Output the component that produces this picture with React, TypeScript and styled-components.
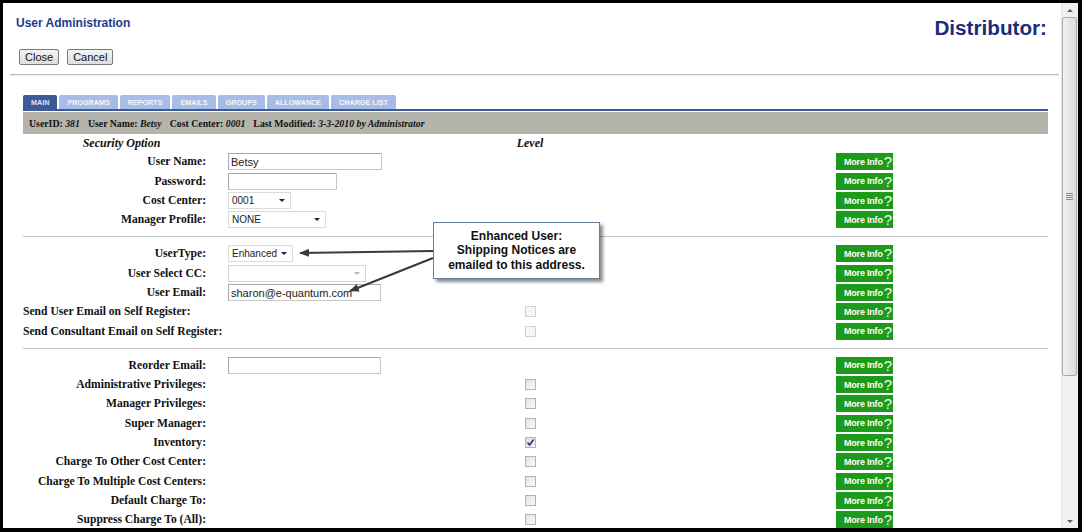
import * as React from 'react';
import styled, { createGlobalStyle } from 'styled-components';

const GlobalStyle = createGlobalStyle`
	html,
	body {
		margin: 0;
		padding: 0;
		overflow: hidden;
		background: #000;
	}
	* {
		box-sizing: border-box;
	}
`;

const Frame = styled.div`
	width: 1082px;
	height: 532px;
	background: #000;
	padding: 3px 4px 4px 3px;
`;

const Window = styled.div`
	display: flex;
	height: 100%;
	background: #fff;
	font-family: Arial, 'Liberation Sans', sans-serif;
`;

const Main = styled.div`
	position: relative;
	flex: 1;
	overflow: hidden;
`;

const Header = styled.div`
	display: flex;
	justify-content: space-between;
	align-items: flex-start;
	padding: 13px 14px 0 13px;
`;

const Title = styled.h1`
	margin: 0;
	font-size: 12px;
	line-height: 14px;
	font-weight: bold;
	color: #1f3c88;
`;

const Brand = styled.div`
	font-size: 20.7px;
	line-height: 24px;
	font-weight: bold;
	color: #1b2d7a;
`;

const ButtonBar = styled.div`
	display: flex;
	gap: 8px;
	margin: 9px 0 0 16px;
`;

const Button = styled.button`
	height: 16px;
	padding: 0 5px;
	font-family: Arial, 'Liberation Sans', sans-serif;
	font-size: 11px;
	line-height: 14px;
	color: #111;
	background: linear-gradient(#f4f4f4, #dedede);
	border: 1px solid #7a7a7a;
	border-radius: 2px;
`;

const Rule = styled.div`
	height: 2px;
	margin: 9px 2px 0 7px;
	border-top: 1px solid #bcbcbc;
	border-bottom: 1px solid #ececec;
`;

const Content = styled.div`
	margin: 19px 13px 0 20px;
`;

const TabStrip = styled.div`
	display: flex;
	gap: 2px;
	border-bottom: 2px solid #3d5a98;
`;

const Tab = styled.div<{ $active?: boolean }>`
	height: 14px;
	padding: 0 8px;
	font-size: 7.2px;
	line-height: 15px;
	font-weight: bold;
	text-transform: uppercase;
	border-radius: 2px 2px 0 0;
	background: ${p => (p.$active ? '#3d5a98' : '#a7bde7')};
	color: ${p => (p.$active ? '#dfe4f0' : '#f3f6fd')};
`;

const InfoBar = styled.div`
	display: flex;
	gap: 8px;
	height: 22px;
	align-items: center;
	padding: 0 6px;
	margin-top: 1px;
	background: #b4b4ac;
	font-family: 'Liberation Serif', 'Times New Roman', serif;
	font-size: 9.8px;
	font-weight: bold;
	color: #111;

	em {
		font-style: italic;
	}
`;

const Row = styled.div<{ $h?: number }>`
	display: grid;
	grid-template-columns: 187px 270px 100px 256px 57px;
	align-items: center;
	height: ${p => p.$h ?? 19.33}px;
	font-family: 'Liberation Serif', 'Times New Roman', serif;
	font-size: 11.6px;
	font-weight: bold;
	color: #111;
`;

const ColumnHead = styled.div<{ $shift?: number }>`
	font-style: italic;
	font-size: 12px;
	text-align: center;
	padding-left: ${p => p.$shift ?? 0}px;
`;

const Label = styled.div<{ $wide?: boolean }>`
	white-space: nowrap;
	text-align: ${p => (p.$wide ? 'left' : 'right')};
	padding-right: ${p => (p.$wide ? 0 : 4)}px;
	grid-column: ${p => (p.$wide ? '1 / 3' : 'auto')};
`;

const Field = styled.div`
	display: flex;
	align-items: center;
	padding-left: 18px;
`;

const TextBox = styled.input<{ $w: number }>`
	width: ${p => p.$w}px;
	height: 17px;
	padding: 0 2px;
	font-family: Arial, 'Liberation Sans', sans-serif;
	font-size: 11px;
	color: #222;
	border: 1px solid #c6c6c6;
	border-top-color: #a9a9a9;
	border-left-color: #a9a9a9;
	outline: none;
`;

const SelectBox = styled.div<{ $w: number; $disabled?: boolean }>`
	display: flex;
	align-items: center;
	width: ${p => p.$w}px;
	height: 17px;
	padding: 0 5px 0 3px;
	font-family: Arial, 'Liberation Sans', sans-serif;
	font-size: 10px;
	font-weight: normal;
	color: #222;
	border: 1px solid ${p => (p.$disabled ? '#d4d4d4' : '#dcdcdc')};
	background: #fff;
`;

const Caret = styled.span<{ $disabled?: boolean }>`
	margin-left: auto;
	width: 0;
	height: 0;
	border-left: 3px solid transparent;
	border-right: 3px solid transparent;
	border-top: 3px solid ${p => (p.$disabled ? '#b9b9b9' : '#222')};
`;

const Level = styled.div`
	display: flex;
	justify-content: center;
`;

const Check = styled.span<{ $disabled?: boolean; $checked?: boolean }>`
	display: flex;
	align-items: center;
	justify-content: center;
	width: 11px;
	height: 11px;
	border: 1px solid ${p => (p.$disabled ? '#d0d0d0' : '#b3b3b3')};
	background: ${p =>
		p.$disabled
			? '#f6f6f6'
			: p.$checked
			? 'linear-gradient(135deg, #d6dcee, #f4f6fb)'
			: 'linear-gradient(135deg, #e2e2e2, #fbfbfb)'};
`;

const MoreInfo = styled.div`
	display: flex;
	align-items: center;
	gap: 1px;
	height: 17px;
	padding-left: 8px;
	background: #1c9a1c;
	color: #fff;
	font-family: Arial, 'Liberation Sans', sans-serif;
	font-size: 9px;
	font-weight: bold;
	letter-spacing: -0.2px;

	span {
		font-size: 15px;
		font-weight: normal;
		line-height: 17px;
		color: #eefbe9;
	}
`;

const Divider = styled.div`
	height: 14.67px;
	display: flex;
	align-items: center;

	&::before {
		content: '';
		flex: 1;
		border-top: 1px solid #c2c2c2;
	}
`;

const Arrows = styled.svg`
	position: absolute;
	left: 0;
	top: 0;
	pointer-events: none;
`;

const Callout = styled.div`
	position: absolute;
	left: 430px;
	top: 219px;
	width: 167px;
	height: 57px;
	display: flex;
	align-items: center;
	justify-content: center;
	text-align: center;
	background: #fff;
	border: 1px solid #667c97;
	box-shadow: 3px 3px 3px rgba(0, 0, 0, 0.45);
	font-size: 12px;
	line-height: 14.5px;
	font-weight: bold;
	color: #111;
`;

const Scrollbar = styled.div`
	display: flex;
	flex-direction: column;
	width: 17px;
	background: #f0f0f0;
	border-left: 1px solid #e6e6e6;
`;

const ScrollArrow = styled.div<{ $down?: boolean }>`
	display: flex;
	align-items: center;
	justify-content: center;
	height: 14px;

	&::before {
		content: '';
		border-left: 3px solid transparent;
		border-right: 3px solid transparent;
		${p => (p.$down ? 'border-top' : 'border-bottom')}: 3px solid #5a5a5a;
	}
`;

const Thumb = styled.div`
	display: flex;
	align-items: center;
	justify-content: center;
	height: 359px;
	margin: 0 1px 0 0;
	border: 1px solid #a9a9a9;
	border-radius: 2px;
	background: linear-gradient(90deg, #f2f2f2, #dcdcdc);
`;

const Grip = styled.div`
	width: 7px;
	height: 7px;
	background: repeating-linear-gradient(#8a8a8a 0 1px, transparent 1px 2px);
`;

const Track = styled.div`
	flex: 1;
`;

const tabs = ['Main', 'Programs', 'Reports', 'Emails', 'Groups', 'Allowance', 'Charge List'];

type Item =
	| { kind: 'text'; label: string; w: number; value?: string }
	| { kind: 'select'; label: string; w: number; value: string; disabled?: boolean }
	| { kind: 'check'; label: string; checked?: boolean; disabled?: boolean; wide?: boolean };

const groups: Item[][] = [
	[
		{ kind: 'text', label: 'User Name:', w: 154, value: 'Betsy' },
		{ kind: 'text', label: 'Password:', w: 109 },
		{ kind: 'select', label: 'Cost Center:', w: 63, value: '0001' },
		{ kind: 'select', label: 'Manager Profile:', w: 98, value: 'NONE' },
	],
	[
		{ kind: 'select', label: 'UserType:', w: 65, value: 'Enhanced' },
		{ kind: 'select', label: 'User Select CC:', w: 138, value: '', disabled: true },
		{ kind: 'text', label: 'User Email:', w: 153, value: 'sharon@e-quantum.com' },
		{ kind: 'check', label: 'Send User Email on Self Register:', disabled: true, wide: true },
		{ kind: 'check', label: 'Send Consultant Email on Self Register:', disabled: true, wide: true },
	],
	[
		{ kind: 'text', label: 'Reorder Email:', w: 153 },
		{ kind: 'check', label: 'Administrative Privileges:' },
		{ kind: 'check', label: 'Manager Privileges:' },
		{ kind: 'check', label: 'Super Manager:' },
		{ kind: 'check', label: 'Inventory:', checked: true },
		{ kind: 'check', label: 'Charge To Other Cost Center:' },
		{ kind: 'check', label: 'Charge To Multiple Cost Centers:' },
		{ kind: 'check', label: 'Default Charge To:' },
		{ kind: 'check', label: 'Suppress Charge To (All):' },
	],
];

const FormRow: React.FC<{ item: Item }> = ({ item }) => {
	const wide = item.kind === 'check' && item.wide;
	return (
		<Row>
			<Label $wide={wide}>{item.label}</Label>
			{!wide && (
				<Field>
					{item.kind === 'text' && (
						<TextBox $w={item.w} value={item.value ?? ''} readOnly />
					)}
					{item.kind === 'select' && (
						<SelectBox $w={item.w} $disabled={item.disabled}>
							{item.value}
							<Caret $disabled={item.disabled} />
						</SelectBox>
					)}
				</Field>
			)}
			<Level>
				{item.kind === 'check' && (
					<Check $disabled={item.disabled} $checked={item.checked}>
						{item.checked && (
							<svg width="9" height="9" viewBox="0 0 9 9">
								<path
									d="M1.5 4.5 L3.6 7 L7.6 1.5"
									fill="none"
									stroke="#2b2f5a"
									strokeWidth="1.5"
								/>
							</svg>
						)}
					</Check>
				)}
			</Level>
			<div />
			<MoreInfo>
				More Info<span>?</span>
			</MoreInfo>
		</Row>
	);
};

export default function App() {
	return (
		<Frame>
			<GlobalStyle />
			<Window>
				<Main>
					<Header>
						<Title>User Administration</Title>
						<Brand>Distributor:</Brand>
					</Header>
					<ButtonBar>
						<Button>Close</Button>
						<Button>Cancel</Button>
					</ButtonBar>
					<Rule />
					<Content>
						<TabStrip>
							{tabs.map((t, i) => (
								<Tab key={t} $active={i === 0}>
									{t}
								</Tab>
							))}
						</TabStrip>
						<InfoBar>
							<span>
								UserID: <em>381</em>
							</span>
							<span>
								User Name: <em>Betsy</em>
							</span>
							<span>
								Cost Center: <em>0001</em>
							</span>
							<span>
								Last Modified: <em>3-3-2010 by Administrator</em>
							</span>
						</InfoBar>
						<Row $h={18.33}>
							<ColumnHead $shift={10}>Security Option</ColumnHead>
							<div />
							<ColumnHead>Level</ColumnHead>
						</Row>
						{groups.map((g, gi) => (
							<React.Fragment key={gi}>
								{gi > 0 && <Divider />}
								{g.map(item => (
									<FormRow key={item.label} item={item} />
								))}
							</React.Fragment>
						))}
					</Content>

					<Arrows width="1058" height="525">
						<defs>
							<marker
								id="head"
								viewBox="0 0 10 8"
								refX="9"
								refY="4"
								markerWidth="10"
								markerHeight="8"
								markerUnits="userSpaceOnUse"
								orient="auto"
							>
								<path d="M0 0 L10 4 L0 8 Z" fill="#3a3a3a" />
							</marker>
						</defs>
						<line x1="430" y1="248" x2="297" y2="250" stroke="#3a3a3a" strokeWidth="2.2" markerEnd="url(#head)" />
						<line x1="430" y1="255" x2="347" y2="288" stroke="#3a3a3a" strokeWidth="2.2" markerEnd="url(#head)" />
					</Arrows>
					<Callout>
						Enhanced User:
						<br />
						Shipping Notices are
						<br />
						emailed to this address.
					</Callout>
				</Main>
				<Scrollbar>
					<ScrollArrow />
					<Thumb>
						<Grip />
					</Thumb>
					<Track />
					<ScrollArrow $down />
				</Scrollbar>
			</Window>
		</Frame>
	);
}
